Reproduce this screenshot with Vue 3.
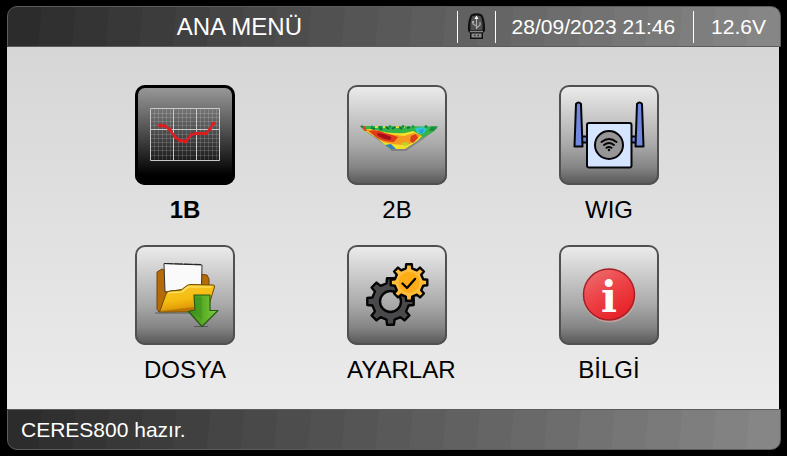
<script setup>
import { ref } from 'vue'

const items = [
  { id: 'line', label: '1B' },
  { id: 'section', label: '2B' },
  { id: 'wig', label: 'WIG' },
  { id: 'file', label: 'DOSYA' },
  { id: 'settings', label: 'AYARLAR' },
  { id: 'info', label: 'BİLGİ' },
]

const selected = ref('line')

// stepped grey ramp used by both bars
const steps = 23
const barFill = `linear-gradient(95deg, ${Array.from({ length: steps }, (_, i) => {
  const c = Math.round(44 + (i * 90) / (steps - 1))
  const from = ((i * 100) / steps).toFixed(2)
  const to = (((i + 1) * 100) / steps).toFixed(2)
  return `rgb(${c}, ${c}, ${c}) ${from}% ${to}%`
}).join(', ')})`

function gear(cx, cy, outer, inner, teeth, turn = 0) {
  const step = (Math.PI * 2) / teeth
  const points = []
  for (let i = 0; i < teeth; i++) {
    const a = i * step + turn
    const corners = [
      [inner, -0.28],
      [outer, -0.19],
      [outer, 0.19],
      [inner, 0.28],
    ]
    for (const [r, k] of corners) {
      points.push(
        `${(cx + r * Math.cos(a + k * step)).toFixed(1)} ${(cy + r * Math.sin(a + k * step)).toFixed(1)}`,
      )
    }
  }
  return `M${points.join('L')}Z`
}

const darkGear = gear(43.5, 56.5, 23.5, 18.5, 8) + ' M54 56.5a10.5 10.5 0 1 0 -21 0a10.5 10.5 0 1 0 21 0Z'
const goldGear = gear(62, 37.5, 18.5, 14.5, 8)
</script>

<template>
  <div class="device">
    <header class="bar bar-top">
      <h1 class="title">ANA MENÜ</h1>
      <div class="status">
        <span class="cell cell-usb">
          <svg width="19" height="27" viewBox="0 0 19 27" role="img" aria-label="USB">
            <path d="M4 1.5Q9.5 -1 15 1.5Q18.5 7 18 18L16 20V26H3V20L1 18Q.5 7 4 1.5Z" fill="#111" />
            <path d="M5 3.5Q9.5 1.5 14 3.5Q16 9 15.5 17H3.500Q3 9 5 3.5Z" fill="#505050" />
            <path d="M9.5 4V16M9.5 13L6 11V9M9.5 15L13 12V9" stroke="#aaa" stroke-width="1.2" fill="none" />
            <path d="M9.5 2.5L11.5 6H7.5Z" fill="#fff" />
            <circle cx="6" cy="9" r="1.2" fill="#aaa" />
            <path d="M3 18.5H16" stroke="#888" stroke-width="1.5" />
            <rect x="4.500" y="20.5" width="10" height="4" fill="#8c8c8c" />
            <path d="M7 22.5H8.5M10.5 22.5H12" stroke="#333" stroke-width="1.5" />
          </svg>
        </span>
        <span class="cell cell-date">28/09/2023 21:46</span>
        <span class="cell">12.6V</span>
      </div>
    </header>

    <main class="menu">
      <button
        v-for="item in items"
        :key="item.id"
        type="button"
        class="item"
        :class="{ selected: item.id === selected }"
        @click="selected = item.id"
      >
        <span class="tile">
          <!-- Profile graph -->
          <svg v-if="item.id === 'line'" viewBox="0 0 100 100" fill="none">
            <path
              d="M19.500 24V75M23.500 24V75M27.500 24V75M31.500 24V75M35.500 24V75M43.500 24V75M47.500 24V75M51.500 24V75M55.500 24V75M65.500 24V75M69.500 24V75M73.500 24V75M77.500 24V75M81.500 24V75M16 28.500H84M16 32.500H84M16 36.500H84M16 40.500H84M16 49.500H84M16 53.500H84M16 57.500H84M16 61.500H84M16 65.500H84M16 70.500H84"
              stroke="#fff"
              stroke-width="1"
              opacity=".15"
            />
            <path d="M15.5 23.5H84.5V75.5H15.5ZM38.5 24V75M61.5 24V75M16 44.5H84" stroke="#c8c8c8" />
            <path
              d="M24.5 40.5L30 41L35 45L40 52L45 55.5L51 56.5L56 50L60 48.5L71 48.5L75 44L78.5 38"
              stroke="#dd1f22"
              stroke-width="2.4"
              stroke-linejoin="round"
            />
            <g fill="#e3191d">
              <circle cx="25" cy="40.5" r="2" />
              <circle cx="30" cy="41" r="1.8" />
              <circle cx="35" cy="45" r="1.8" />
              <circle cx="40" cy="52" r="1.8" />
              <circle cx="45" cy="55.5" r="2" />
              <circle cx="50" cy="56.5" r="2" />
              <circle cx="56" cy="50" r="1.8" />
              <circle cx="61" cy="48.5" r="1.8" />
              <circle cx="66" cy="48.5" r="1.8" />
              <circle cx="71" cy="48.5" r="1.8" />
              <circle cx="75" cy="44" r="1.8" />
              <circle cx="78.5" cy="38.5" r="1.8" />
            </g>
          </svg>

          <!-- Resistivity section -->
          <svg v-else-if="item.id === 'section'" viewBox="0 0 100 100">
            <defs>
              <clipPath id="section-clip">
                <path d="M13 41L91 41.5L86 47L73 54L58 64H44L38 60L30 53L18 46Z" />
              </clipPath>
            </defs>
            <path d="M16 45L91 43L75 55L59 66H45L31 55Z" fill="#444" opacity=".35" />
            <g clip-path="url(#section-clip)">
              <path d="M12 40H92V65H12Z" fill="#35b44a" />
              <path d="M14 46Q23 42 32 46Q44 49 58 48L66 46L75 51L62 65H40Z" fill="#f4e02c" />
              <path d="M18 45Q27 44 36 48Q48 50 57 51L67 48L74 50L67 57L60 60Q47 60 36 57Z" fill="#f39a1f" />
              <path d="M22 46Q30 44 38 48Q46 50 51 52L47 57Q38 57 30 53Z" fill="#e23a1c" />
              <path d="M30 48Q36 48 42 51Q46 52 43 55Q36 54 31 51Z" fill="#a80f18" />
              <path d="M64 51L69 49L71 53L66 58L63 56Z" fill="#df3b1d" />
              <path d="M54 58L62 57L58 62Z" fill="#bcd62f" />
              <path d="M38 60L44 59L50 65H42Z" fill="#2c84ba" />
              <path d="M68 43L76 42L80 44L76 49L70 48Z" fill="#30c8cf" />
              <path d="M72 45L77 44L76 48L73 48Z" fill="#2b9be0" />
              <path d="M84 41L91 41L87 46L82 46Z" fill="#17913d" />
              <path d="M13 41L18 41L20 46L16 46Z" fill="#d34a27" />
              <path
                d="M24 43L28 44M32 42L35 45M39 42L42 44M45 44L48 42M52 42L55 44M60 43L63 42"
                stroke="#08763d"
                stroke-width="2"
              />
              <path d="M28 42H31M36 42H38M49 42H52M56 42H58" stroke="#ecdf38" stroke-width="2" />
            </g>
            <g fill="#169447">
              <circle cx="15" cy="41.5" r="1.3" />
              <circle cx="25" cy="42" r="1.5" />
              <circle cx="34" cy="42" r="1.3" />
              <circle cx="43" cy="41.5" r="1.3" />
              <circle cx="56" cy="41.5" r="1.5" />
              <circle cx="66" cy="41.5" r="1.3" />
              <circle cx="79" cy="41.5" r="1.5" />
            </g>
          </svg>

          <!-- Wireless unit with two antennas -->
          <svg v-else-if="item.id === 'wig'" viewBox="0 0 100 100" stroke="#050509" stroke-width="2" stroke-linejoin="round">
            <path d="M22 51.5H28V57.5H22ZM72 51.5H78V57.5H72Z" fill="#7184d5" />
            <path d="M17 19Q19.5 16 22 19L23.500 61.5H15.5Z" fill="#7088df" />
            <path d="M78 19Q80.5 16 83 19L84.500 61.5H76.5Z" fill="#7088df" />
            <rect x="28" y="38" width="44.5" height="44.5" rx="2" fill="#d5e5ff" />
            <circle cx="50" cy="60" r="14" fill="#969696" />
            <g fill="none" stroke-width="2" stroke-linecap="round">
              <path d="M42.5 57Q50 51 57.5 57" />
              <path d="M45 60Q50 56 55 60" />
              <path d="M47.5 62.8Q50 61 52.5 62.8" />
            </g>
            <circle cx="50" cy="65" r="1.2" fill="#050509" stroke="none" />
          </svg>

          <!-- Folder with download arrow -->
          <svg v-else-if="item.id === 'file'" viewBox="0 0 100 100" stroke-linejoin="round">
            <defs>
              <linearGradient id="folder-front" x2=".3" y2="1">
                <stop offset="0" stop-color="#f7ca28" />
                <stop offset=".6" stop-color="#f5bd12" />
                <stop offset="1" stop-color="#d99105" />
              </linearGradient>
              <linearGradient id="arrow-fill" x2="1">
                <stop offset="0" stop-color="#398d18" />
                <stop offset="1" stop-color="#7dce38" />
              </linearGradient>
            </defs>
            <path d="M20 68H59M59 81.5H73" stroke="#373737" stroke-width="1.2" opacity=".6" />
            <path d="M22 27L27 24L31 26L72 30L74 34V48L24 67L22 64Z" fill="#b66b09" stroke="#71430b" stroke-width="1" />
            <path d="M29 18.5L67 20L66.500 42L30 47Z" fill="#fafafa" stroke="#37342d" stroke-width="1" />
            <path d="M29 18.5L66 19.5" stroke="#262626" stroke-width="1.2" stroke-dasharray="9 1" />
            <path
              d="M24.5 67L31 49Q32 46 35 46L46 45L52 40.5Q53 39.5 56 39.5L78 40Q80 40 79.5 42L73 63Q72 66 69 66.5Z"
              fill="url(#folder-front)"
              stroke="#6d4a05"
              stroke-width="1"
            />
            <path d="M33 48L47 47L53 42L77 42" fill="none" stroke="#ffe774" stroke-width="1.2" />
            <path d="M25 66L59 62L60 67Z" fill="#ac6805" opacity=".7" />
            <path d="M59 50H75V65.5H83L67 81.5L53.5 66.5L60 65Z" fill="url(#arrow-fill)" stroke="#285b16" stroke-width="1.2" />
            <path d="M61 52H67V75L58 67H61Z" fill="#348b19" opacity=".4" />
          </svg>

          <!-- Gears -->
          <svg v-else-if="item.id === 'settings'" viewBox="0 0 100 100" stroke="#050505" stroke-width="2.4" stroke-linejoin="round">
            <path :d="darkGear" fill="#49494b" fill-rule="evenodd" />
            <path :d="goldGear" fill="#ffbd3b" />
            <circle cx="62" cy="37.5" r="10.5" fill="#ffac16" stroke="none" />
            <path d="M55.5 38.5L60 43L68 34" fill="none" stroke-linecap="round" />
          </svg>

          <!-- Info badge -->
          <svg v-else viewBox="0 0 100 100">
            <defs>
              <linearGradient id="info-fill" x2=".6" y2="1">
                <stop offset="0" stop-color="#ee7475" />
                <stop offset=".5" stop-color="#ed4549" />
                <stop offset="1" stop-color="#e72329" />
              </linearGradient>
            </defs>
            <circle cx="50.5" cy="50.5" r="27" fill="#d4aaa7" opacity=".65" />
            <circle cx="50" cy="49.5" r="25.5" fill="url(#info-fill)" stroke="#a51f26" stroke-width="1.5" />
            <text class="info-mark" x="50" y="67" text-anchor="middle">i</text>
          </svg>
        </span>
        <span class="label">{{ item.label }}</span>
      </button>
    </main>

    <footer class="bar bar-bottom">CERES800 hazır.</footer>
  </div>
</template>

<style>
body {
  margin: 0;
  background: #000;
}
</style>

<style scoped>
.device {
  display: flex;
  flex-direction: column;
  box-sizing: border-box;
  min-height: 100vh;
  padding: 6px 6px 6px 7px;
  background: #000;
  font-family: 'Liberation Sans', Arial, sans-serif;
}

.bar {
  display: flex;
  align-items: center;
  box-sizing: border-box;
  height: 41px;
  border: 1px solid #5c5c5c;
  background: v-bind(barFill);
  color: #fff;
  font-size: 21px;
  line-height: 24px;
}

.bar-top {
  padding: 0 14px;
  border-radius: 10px 10px 0 0;
}

.bar-bottom {
  padding: 0 13px;
  border-radius: 0 0 10px 10px;
}

.title {
  flex: 1;
  margin: 0;
  font-size: 24px;
  font-weight: 400;
  line-height: 28px;
  text-align: center;
}

.status {
  display: flex;
}

.cell {
  display: flex;
  align-items: center;
  height: 32px;
  padding: 0 0 0 17px;
  border-left: 1px solid #fff;
  white-space: nowrap;
}

.cell-usb {
  padding: 0 9px;
}

.cell-date {
  padding: 0 18px 0 16px;
}

.menu {
  display: grid;
  flex: 1;
  grid-template-columns: repeat(3, 1fr);
  align-content: start;
  justify-items: center;
  row-gap: 21px;
  margin-right: 2px;
  padding: 38px 64px 24px 72px;
  background: linear-gradient(#d6d6d6, #ebebeb);
}

.item {
  width: 100px;
  padding: 0;
  border: 0;
  background: none;
  color: #000;
  font: inherit;
  cursor: pointer;
}

.tile {
  display: block;
  height: 100px;
  border-radius: 10px;
  background: linear-gradient(#ededed, #a9a9a9 60%, #858585 82%, #555);
  box-shadow: inset 0 0 0 2px #505050;
}

.tile svg {
  display: block;
  width: 100%;
  height: 100%;
}

.label {
  display: block;
  margin-top: 11px;
  font-size: 24px;
  line-height: 28px;
  text-align: center;
  white-space: nowrap;
}

.selected .tile {
  background: linear-gradient(#9c9c9c, #5a5a5a 40%, #1c1c1c 75%, #000 90%);
  box-shadow: inset 0 0 0 3px #000;
}

.selected .label {
  font-weight: 700;
}

.info-mark {
  fill: #fff;
  font-family: 'DejaVu Serif', serif;
  font-size: 42px;
  font-weight: 700;
}
</style>
